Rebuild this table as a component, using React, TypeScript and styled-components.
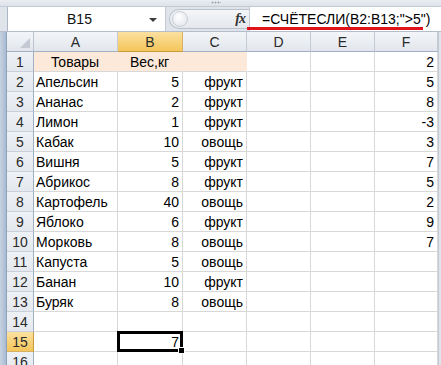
import styled, { createGlobalStyle } from "styled-components"

const GlobalStyle = createGlobalStyle`
  html, body {
    margin: 0;
    padding: 0;
    background: #dfe4ea;
  }
  body {
    font-family: "Liberation Sans", Arial, sans-serif;
    font-size: 14px;
    color: #000;
  }
`

type Align = "left" | "center" | "right"

const columns: { name: string; width: number; align: Align }[] = [
  { name: "A", width: 84, align: "left" },
  { name: "B", width: 65, align: "right" },
  { name: "C", width: 64, align: "right" },
  { name: "D", width: 64, align: "right" },
  { name: "E", width: 64, align: "right" },
  { name: "F", width: 63, align: "right" },
]

// A..F values per row, empty string = blank cell
const rows: string[][] = [
  ["Товары", "Вес,кг", "", "", "", "2"],
  ["Апельсин", "5", "фрукт", "", "", "5"],
  ["Ананас", "2", "фрукт", "", "", "8"],
  ["Лимон", "1", "фрукт", "", "", "-3"],
  ["Кабак", "10", "овощь", "", "", "3"],
  ["Вишня", "5", "фрукт", "", "", "7"],
  ["Абрикос", "8", "фрукт", "", "", "5"],
  ["Картофель", "40", "овощь", "", "", "2"],
  ["Яблоко", "6", "фрукт", "", "", "9"],
  ["Морковь", "8", "овощь", "", "", "7"],
  ["Капуста", "5", "овощь", "", "", ""],
  ["Банан", "10", "фрукт", "", "", ""],
  ["Буряк", "8", "овощь", "", "", ""],
  ["", "", "", "", "", ""],
  ["", "7", "", "", "", ""],
  ["", "", "", "", "", ""],
]

const activeCol = 1
const activeRow = 15

const Window = styled.div`
  width: 441px;
  height: 365px;
  overflow: hidden;
  display: flex;
  flex-direction: column;
  background: #dfe4ea;
`

const RibbonEdge = styled.div`
  height: 7px;
  flex-shrink: 0;
  display: flex;
  justify-content: center;
  align-items: flex-start;
  background: linear-gradient(#e9edf2, #dde2e9);
  border-bottom: 1px solid #c3cad4;
  box-sizing: border-box;
`

const Grip = styled.span`
  width: 10px;
  height: 3px;
  margin-left: -10px;
  margin-top: 1px;
  background-image: radial-gradient(circle, #9aa3ae 0.8px, transparent 1.2px);
  background-size: 3px 3px;
`

const FormulaBar = styled.div`
  height: 24px;
  flex-shrink: 0;
  display: flex;
  margin-left: 7px;
  border-left: 1px solid #aeb8c5;
  box-sizing: border-box;
`

const NameBox = styled.div`
  width: 157px;
  display: flex;
  align-items: center;
  background: #fff;
  border-right: 1px solid #c3cad4;
`

const NameText = styled.span`
  flex: 1;
  text-align: center;
  font-size: 14px;
  color: #111;
  padding-left: 2px;
`

const DropArrow = styled.span`
  width: 0;
  height: 0;
  margin: 2px 8px 0 0;
  border-left: 4px solid transparent;
  border-right: 4px solid transparent;
  border-top: 4px solid #3c3c3c;
`

const ButtonStrip = styled.div`
  width: 83px;
  display: flex;
  align-items: center;
  padding: 2px 0 2px 3px;
  box-sizing: border-box;
  background: #dfe4ea;
`

const Pill = styled.div`
  flex: 1;
  height: 100%;
  display: flex;
  align-items: center;
  justify-content: space-between;
  border: 1px solid #b9c1cc;
  border-right: none;
  border-radius: 10px 0 0 10px;
  background: linear-gradient(#f4f6f8, #e4e8ed);
  box-sizing: border-box;
`

const KnobHole = styled.span`
  width: 14px;
  height: 14px;
  margin-left: 2px;
  border-radius: 50%;
  border: 1px solid #c8ced6;
  background: radial-gradient(circle at 40% 35%, #ffffff, #dde2e8);
`

const FxLabel = styled.span`
  font-family: "Liberation Serif", "Times New Roman", serif;
  font-style: italic;
  font-weight: bold;
  font-size: 14px;
  color: #333;
  margin-right: 4px;
  letter-spacing: -1px;
`

const FormulaInput = styled.div`
  flex: 1;
  position: relative;
  display: flex;
  align-items: center;
  padding-left: 12px;
  background: #fff;
  border-left: 1px solid #c3cad4;
  font-size: 14px;
  color: #000;
  white-space: nowrap;
`

const Underline = styled.span`
  position: absolute;
  left: -3px;
  right: 18px;
  bottom: 1px;
  height: 3px;
  background: #e0111b;
`

const SheetFrame = styled.div`
  flex: 1;
  display: flex;
  border-top: 1px solid #b4bdc9;
  background: #dfe4ea;
`

const LeftRail = styled.div`
  width: 7px;
  flex-shrink: 0;
  background: linear-gradient(90deg, #c6d2e1, #a9bbd2);
  border-right: 1px solid #8fa2bb;
  box-sizing: border-box;
`

const Grid = styled.div`
  display: grid;
  grid-template-columns: 27px ${columns.map((c) => `${c.width}px`).join(" ")};
  grid-auto-rows: 20px;
  background: #fff;
  align-content: start;
`

const Corner = styled.div`
  position: relative;
  background: linear-gradient(#f3f5f8, #e2e6ec);
  border-right: 1px solid #bcc4cf;
  border-bottom: 1px solid #9fb0c4;
  box-sizing: border-box;
  &::after {
    content: "";
    position: absolute;
    right: 3px;
    bottom: 3px;
    border-left: 10px solid transparent;
    border-bottom: 10px solid #c3cad4;
  }
`

const ColHead = styled.div<{ $active?: boolean }>`
  display: flex;
  align-items: center;
  justify-content: center;
  padding-top: 1px;
  font-size: 14px;
  color: #2a2a2a;
  background: ${(p) =>
    p.$active
      ? "linear-gradient(#fbe0a0, #f4c65a)"
      : "linear-gradient(#f3f5f8, #e2e6ec)"};
  border-right: 1px solid ${(p) => (p.$active ? "#d8b063" : "#c3cad4")};
  border-bottom: 1px solid ${(p) => (p.$active ? "#c89a3e" : "#9fb0c4")};
  box-sizing: border-box;
`

const RowHead = styled.div<{ $active?: boolean }>`
  display: flex;
  align-items: center;
  justify-content: center;
  padding-top: 1px;
  font-size: 14px;
  color: #2a2a2a;
  background: ${(p) =>
    p.$active
      ? "linear-gradient(#fbe0a0, #f4c65a)"
      : "linear-gradient(#eef1f5, #e4e8ee)"};
  border-right: 1px solid ${(p) => (p.$active ? "#c89a3e" : "#9fb0c4")};
  border-bottom: 1px solid ${(p) => (p.$active ? "#d8b063" : "#c8cfd8")};
  box-sizing: border-box;
`

const Cell = styled.div<{ $align: Align; $title?: boolean; $current?: boolean }>`
  position: relative;
  z-index: ${(p) => (p.$current ? 2 : "auto")};
  padding: 2px 3px 0 2px;
  line-height: 17px;
  font-size: 14px;
  text-align: ${(p) => p.$align};
  white-space: nowrap;
  background: ${(p) => (p.$title ? "#fde9d9" : "#fff")};
  border-right: 1px solid ${(p) => (p.$title ? "#fde9d9" : "#d8d8d8")};
  border-bottom: 1px solid #d8d8d8;
  box-sizing: border-box;
`

// active-cell frame drawn over the neighbouring gridlines
const Selection = styled.span`
  position: absolute;
  left: -1px;
  top: -1px;
  right: -1px;
  bottom: -1px;
  border: 3px solid #000;
  pointer-events: none;
`

const FillHandle = styled.span`
  position: absolute;
  right: -5px;
  bottom: -5px;
  width: 5px;
  height: 5px;
  background: #000;
  border: 1px solid #fff;
`

const RightRail = styled.div`
  flex: 1;
  background: #dfe4ea;
  border-left: 1px solid #c3cad4;
`

export default function App() {
  return (
    <Window>
      <GlobalStyle />
      <RibbonEdge>
        <Grip />
      </RibbonEdge>
      <FormulaBar>
        <NameBox>
          <NameText>B15</NameText>
          <DropArrow />
        </NameBox>
        <ButtonStrip>
          <Pill>
            <KnobHole />
            <FxLabel>fx</FxLabel>
          </Pill>
        </ButtonStrip>
        <FormulaInput>
          =СЧЁТЕСЛИ(B2:B13;"&gt;5")
          <Underline />
        </FormulaInput>
      </FormulaBar>
      <SheetFrame>
        <LeftRail />
        <Grid>
          <Corner />
          {columns.map((c, i) => (
            <ColHead key={c.name} $active={i === activeCol}>
              {c.name}
            </ColHead>
          ))}
          {rows.map((values, r) => {
            const rowNo = r + 1
            return [
              <RowHead key={`h${rowNo}`} $active={rowNo === activeRow}>
                {rowNo}
              </RowHead>,
              ...values.map((v, c) => {
                const title = rowNo === 1 && c < 3
                const align: Align = title ? "center" : columns[c].align
                const selected = rowNo === activeRow && c === activeCol
                return (
                  <Cell
                    key={`${rowNo}-${c}`}
                    $align={align}
                    $title={title}
                    $current={selected}
                  >
                    {v}
                    {selected && (
                      <Selection>
                        <FillHandle />
                      </Selection>
                    )}
                  </Cell>
                )
              }),
            ]
          })}
        </Grid>
        <RightRail />
      </SheetFrame>
    </Window>
  )
}
